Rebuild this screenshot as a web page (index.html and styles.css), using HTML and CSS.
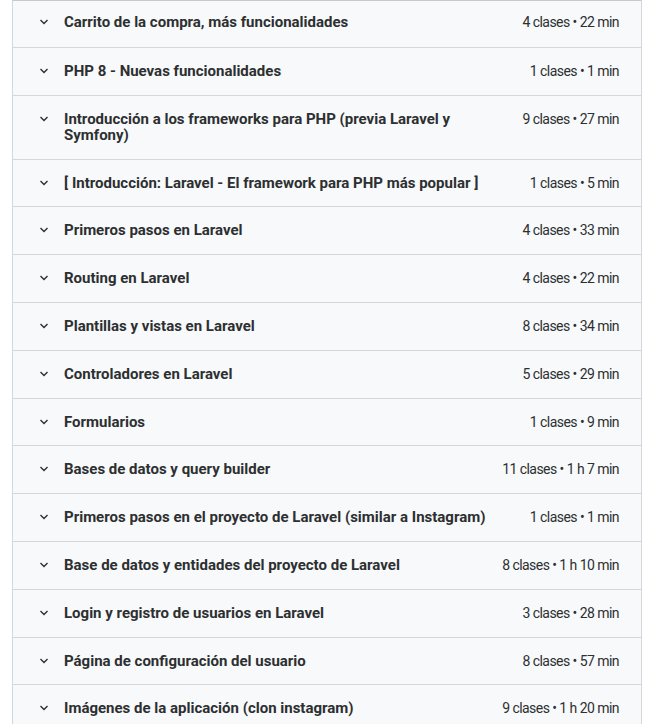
FILE: index.html
```html
<!DOCTYPE html>
<html lang="es">
<head>
<meta charset="utf-8">
<link rel="stylesheet" href="styles.css">
</head>
<body>
<div class="curriculum">
  <div class="row"><span class="chev"><svg viewBox="0 0 10 8" width="10" height="8"><path d="M1.5 2.1l3.5 3.5 3.5-3.5"/></svg></span><span class="title">Carrito de la compra, más funcionalidades</span><span class="meta">4 clases • 22 min</span></div>
  <div class="row"><span class="chev"><svg viewBox="0 0 10 8" width="10" height="8"><path d="M1.5 2.1l3.5 3.5 3.5-3.5"/></svg></span><span class="title">PHP 8 - Nuevas funcionalidades</span><span class="meta">1 clases • 1 min</span></div>
  <div class="row"><span class="chev"><svg viewBox="0 0 10 8" width="10" height="8"><path d="M1.5 2.1l3.5 3.5 3.5-3.5"/></svg></span><span class="title">Introducción a los frameworks para PHP (previa Laravel y Symfony)</span><span class="meta">9 clases • 27 min</span></div>
  <div class="row"><span class="chev"><svg viewBox="0 0 10 8" width="10" height="8"><path d="M1.5 2.1l3.5 3.5 3.5-3.5"/></svg></span><span class="title">[ Introducción: Laravel - El framework para PHP más popular ]</span><span class="meta">1 clases • 5 min</span></div>
  <div class="row"><span class="chev"><svg viewBox="0 0 10 8" width="10" height="8"><path d="M1.5 2.1l3.5 3.5 3.5-3.5"/></svg></span><span class="title">Primeros pasos en Laravel</span><span class="meta">4 clases • 33 min</span></div>
  <div class="row"><span class="chev"><svg viewBox="0 0 10 8" width="10" height="8"><path d="M1.5 2.1l3.5 3.5 3.5-3.5"/></svg></span><span class="title">Routing en Laravel</span><span class="meta">4 clases • 22 min</span></div>
  <div class="row"><span class="chev"><svg viewBox="0 0 10 8" width="10" height="8"><path d="M1.5 2.1l3.5 3.5 3.5-3.5"/></svg></span><span class="title">Plantillas y vistas en Laravel</span><span class="meta">8 clases • 34 min</span></div>
  <div class="row"><span class="chev"><svg viewBox="0 0 10 8" width="10" height="8"><path d="M1.5 2.1l3.5 3.5 3.5-3.5"/></svg></span><span class="title">Controladores en Laravel</span><span class="meta">5 clases • 29 min</span></div>
  <div class="row"><span class="chev"><svg viewBox="0 0 10 8" width="10" height="8"><path d="M1.5 2.1l3.5 3.5 3.5-3.5"/></svg></span><span class="title">Formularios</span><span class="meta">1 clases • 9 min</span></div>
  <div class="row"><span class="chev"><svg viewBox="0 0 10 8" width="10" height="8"><path d="M1.5 2.1l3.5 3.5 3.5-3.5"/></svg></span><span class="title">Bases de datos y query builder</span><span class="meta">11 clases • 1 h 7 min</span></div>
  <div class="row"><span class="chev"><svg viewBox="0 0 10 8" width="10" height="8"><path d="M1.5 2.1l3.5 3.5 3.5-3.5"/></svg></span><span class="title">Primeros pasos en el proyecto de Laravel (similar a Instagram)</span><span class="meta">1 clases • 1 min</span></div>
  <div class="row"><span class="chev"><svg viewBox="0 0 10 8" width="10" height="8"><path d="M1.5 2.1l3.5 3.5 3.5-3.5"/></svg></span><span class="title">Base de datos y entidades del proyecto de Laravel</span><span class="meta">8 clases • 1 h 10 min</span></div>
  <div class="row"><span class="chev"><svg viewBox="0 0 10 8" width="10" height="8"><path d="M1.5 2.1l3.5 3.5 3.5-3.5"/></svg></span><span class="title">Login y registro de usuarios en Laravel</span><span class="meta">3 clases • 28 min</span></div>
  <div class="row"><span class="chev"><svg viewBox="0 0 10 8" width="10" height="8"><path d="M1.5 2.1l3.5 3.5 3.5-3.5"/></svg></span><span class="title">Página de configuración del usuario</span><span class="meta">8 clases • 57 min</span></div>
  <div class="row"><span class="chev"><svg viewBox="0 0 10 8" width="10" height="8"><path d="M1.5 2.1l3.5 3.5 3.5-3.5"/></svg></span><span class="title">Imágenes de la aplicación (clon instagram)</span><span class="meta">9 clases • 1 h 20 min</span></div>
</div>
</body>
</html>
```
FILE: styles.css
```css
html, body {
  margin: 0;
  padding: 0;
  background: #ffffff;
  overflow: hidden;
}
body {
  font-family: Roboto, "Liberation Sans", sans-serif;
  color: #2d2f31;
}
.curriculum {
  margin-left: 12px;
  width: 630px;
  box-sizing: border-box;
  border: 1px solid #d1d7dc;
  border-top-color: #c4cacf;
  border-bottom: none;
}
.row {
  display: flex;
  align-items: flex-start;
  background: #f7f9fa;
  border-bottom: 1px solid #d1d7dc;
  padding: 15px 22px 15.8px 26px;
}
.row:first-child {
  padding-top: 13px;
  padding-bottom: 17px;
}
.chev {
  flex: none;
  width: 10px;
  height: 16px;
  margin-right: 15px;
  display: flex;
  align-items: center;
  justify-content: center;
}
.chev svg {
  fill: none;
  stroke: #2d2f31;
  stroke-width: 1.4;
}
.title {
  flex: 1;
  font-weight: 700;
  font-size: 15px;
  line-height: 16px;
  padding-right: 24px;
}
.meta {
  flex: none;
  font-size: 14px;
  line-height: 16px;
  letter-spacing: -0.55px;
  white-space: nowrap;
}
```
